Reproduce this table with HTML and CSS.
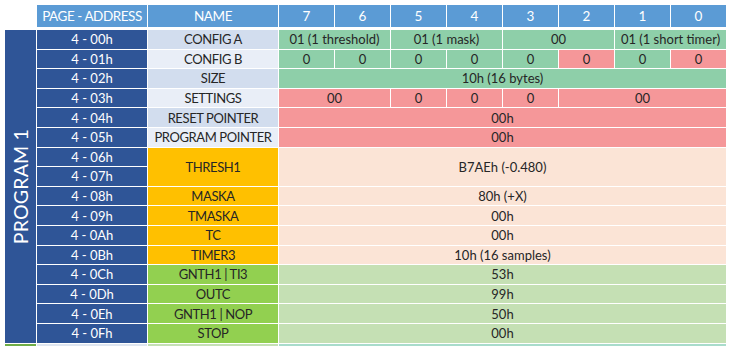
FILE: index.html
```html
<!DOCTYPE html>
<html>
<head>
<meta charset="utf-8">
<link rel="stylesheet" href="styles.css">
</head>
<body>
<div class="sheet">
  <div class="grid head">
    <div class="blank"></div>
    <div class="th caps">PAGE - ADDRESS</div>
    <div class="th caps">NAME</div>
    <div class="th">7</div><div class="th">6</div><div class="th">5</div><div class="th">4</div>
    <div class="th">3</div><div class="th">2</div><div class="th">1</div><div class="th">0</div>
  </div>
  <div class="grid body">
    <div class="prog"><span>PROGRAM 1</span></div>

    <div class="addr">4 - 00h</div><div class="name band-a">CONFIG A</div>
    <div class="v green s2">01 (1 threshold)</div><div class="v green s2">01 (1 mask)</div><div class="v green s2">00</div><div class="v green s2">01 (1 short timer)</div>

    <div class="addr">4 - 01h</div><div class="name band-b">CONFIG B</div>
    <div class="v green">0</div><div class="v green">0</div><div class="v green">0</div><div class="v green">0</div>
    <div class="v green">0</div><div class="v red">0</div><div class="v green">0</div><div class="v red">0</div>

    <div class="addr">4 - 02h</div><div class="name band-a">SIZE</div>
    <div class="v green s8">10h (16 bytes)</div>

    <div class="addr">4 - 03h</div><div class="name band-b">SETTINGS</div>
    <div class="v red s2">00</div><div class="v red">0</div><div class="v red">0</div><div class="v red">0</div><div class="v red s3">00</div>

    <div class="addr">4 - 04h</div><div class="name band-a">RESET POINTER</div>
    <div class="v red s8">00h</div>

    <div class="addr">4 - 05h</div><div class="name band-b">PROGRAM POINTER</div>
    <div class="v red s8">00h</div>

    <div class="addr">4 - 06h</div><div class="name orange tall">THRESH1</div>
    <div class="v peach s8 tall">B7AEh (-0.480)</div>
    <div class="addr">4 - 07h</div>

    <div class="addr">4 - 08h</div><div class="name orange">MASKA</div>
    <div class="v peach s8">80h (+X)</div>

    <div class="addr">4 - 09h</div><div class="name orange">TMASKA</div>
    <div class="v peach s8">00h</div>

    <div class="addr">4 - 0Ah</div><div class="name orange">TC</div>
    <div class="v peach s8">00h</div>

    <div class="addr">4 - 0Bh</div><div class="name orange">TIMER3</div>
    <div class="v peach s8">10h (16 samples)</div>

    <div class="addr">4 - 0Ch</div><div class="name lime">GNTH1 | TI3</div>
    <div class="v pale s8">53h</div>

    <div class="addr">4 - 0Dh</div><div class="name lime">OUTC</div>
    <div class="v pale s8">99h</div>

    <div class="addr">4 - 0Eh</div><div class="name lime">GNTH1 | NOP</div>
    <div class="v pale s8">50h</div>

    <div class="addr">4 - 0Fh</div><div class="name lime">STOP</div>
    <div class="v pale s8">00h</div>

    <div class="prog2"></div>
    <div class="addr next"></div><div class="name nextname"></div>
    <div class="v teal s8"></div>
  </div>
</div>
</body>
</html>
```

FILE: styles.css
```css
html, body {
  margin: 0;
  padding: 0;
  background: #ffffff;
  height: 346px;
  overflow: hidden;
}

.sheet {
  padding: 5px 0 0 5px;
  font-family: Lato, "Open Sans", "Liberation Sans", sans-serif;
  font-size: 13px;
  color: #262626;
}

.grid {
  display: grid;
  grid-template-columns: 31px 110px 130px repeat(8, 55px);
  gap: 1px;
}

.head {
  grid-template-rows: 22px;
  margin-bottom: 3px;
}

.body {
  grid-auto-rows: 18.6px;
}

.th {
  background: #5b9bd5;
  color: #ffffff;
  font-size: 13.5px;
  display: flex;
  align-items: center;
  justify-content: center;
}

.caps {
  letter-spacing: -0.45px;
}

.prog {
  grid-column: 1;
  grid-row: 1 / span 16;
  background: #2f5597;
  color: #ffffff;
  display: flex;
  align-items: center;
  justify-content: center;
  overflow: hidden;
}

.prog span {
  display: block;
  transform: rotate(-90deg);
  white-space: nowrap;
  font-size: 19.5px;
  letter-spacing: 0.2px;
}

.prog2 {
  grid-column: 1;
  grid-row: 17;
  background: #70ad47;
}

.addr {
  grid-column: 2;
  background: #2f5597;
  color: #ffffff;
  display: flex;
  align-items: center;
  justify-content: center;
}

.name {
  grid-column: 3;
  display: flex;
  align-items: center;
  justify-content: center;
  white-space: nowrap;
  letter-spacing: -0.4px;
}

.v {
  display: flex;
  align-items: center;
  justify-content: center;
  white-space: nowrap;
}

.s2 { grid-column: span 2; }
.s3 { grid-column: span 3; }
.s8 { grid-column: span 8; }
.tall { grid-row: span 2; }

.band-a { background: #d2ddee; }
.band-b { background: #e9eef7; }
.orange { background: #ffc000; }
.lime { background: #92d050; }

.green { background: #8ecfa9; }
.red { background: #f59799; }
.peach { background: #fbe4d6; }
.pale { background: #c5e0b4; }
.teal { background: #a9dccb; }

.next { background: #dfe6f0; }
.nextname { background: #c5e0b4; }
```
